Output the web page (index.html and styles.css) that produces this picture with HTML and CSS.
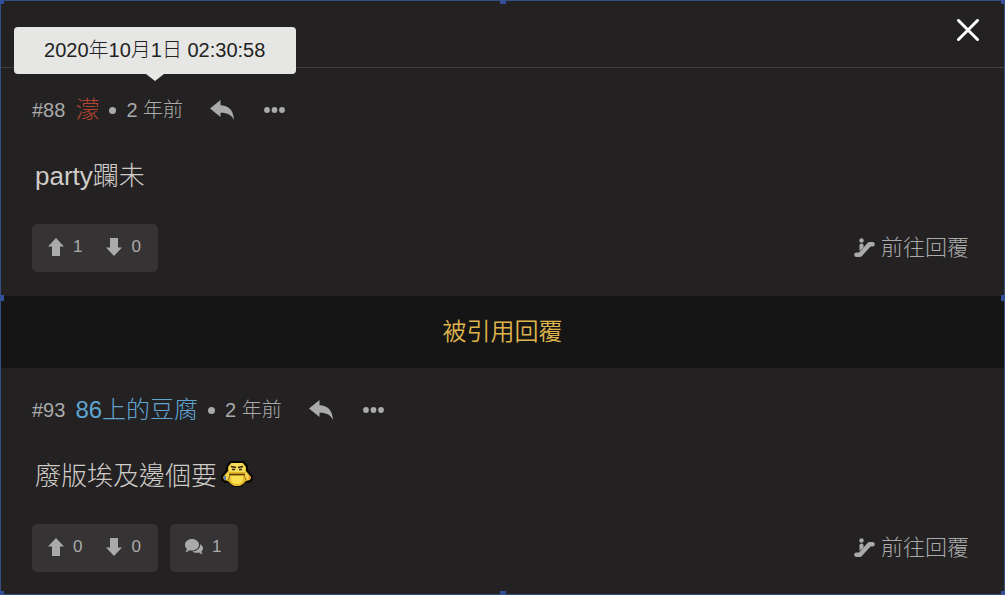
FILE: index.html
```
<!DOCTYPE html>
<html lang="zh-Hant">
<head>
    <meta charset="UTF-8">
    <meta name="viewport" content="width=device-width, initial-scale=1.0">
    <title>被引用回覆</title>
    <link rel="stylesheet" href="styles.css">
</head>
<body>

<!-- Shared icons -->
<svg class="sprite" aria-hidden="true">
    <symbol id="reply" viewBox="0 0 24 20"><path d="M0 8.500 10.500 0v5.200C18 5.400 23.500 9.500 24 20c-2.500-4.800-6.500-7.300-13.500-7.200V17z"/></symbol>
    <symbol id="more" viewBox="0 0 21 6"><circle cx="3" cy="3" r="2.900"/><circle cx="10.500" cy="3" r="2.900"/><circle cx="18" cy="3" r="2.900"/></symbol>
    <symbol id="up" viewBox="0 0 16 18"><path d="M8 0 16 8.500H12V18H4V8.500H0z"/></symbol>
    <symbol id="down" viewBox="0 0 16 18"><path d="M8 18 0 9.500H4V0H12V9.500H16z"/></symbol>
    <symbol id="goto" viewBox="0 0 21 20"><circle cx="7.500" cy="2.500" r="2.200"/><path d="M5.500 7.200Q5.500 5.500 7.500 5.500T9.500 7.200V9.500L5.500 13z"/><path d="M2.500 16.800H6L15.500 6.200H18.500" fill="none" stroke="currentColor" stroke-width="4.600" stroke-linecap="round" stroke-linejoin="round"/></symbol>
    <symbol id="comments" viewBox="0 0 18 16"><path d="M7 0c4 0 7 2.500 7 5.800s-3 5.800-7 5.800c-1 0-1.900-.1-2.700-.4C3.200 12.300 1.900 13 .5 13c.8-.9 1.300-1.900 1.400-3C.7 8.900 0 7.400 0 5.800 0 2.500 3 0 7 0z"/><path d="M15.200 5.200c1.700.9 2.800 2.300 2.800 4 0 1.300-.6 2.500-1.600 3.300.1 1 .6 1.900 1.300 2.700-1.500-.1-2.800-.7-3.700-1.600-2.700.6-5.400-.1-6.700-1.200 4.300 0 8-2.800 7.900-7.200z"/></symbol>
</svg>

<div class="dialog">
    <header class="dialog-header">
        <button class="btn close" aria-label="關閉">
            <svg width="22" height="22" viewBox="0 0 22 22"><path d="M1.500 1.500 20.500 20.500M20.500 1.500 1.500 20.500"/></svg>
        </button>
    </header>

    <article class="post">
        <div class="meta">
            <span class="number">#88</span>
            <a class="author female" href="#">濛</a>
            <span class="dot"></span>
            <span class="time">2 年前<span class="tooltip" role="tooltip">2020年10月1日 02:30:58</span></span>
            <button class="btn reply" aria-label="回覆"><svg width="24" height="20"><use href="#reply"/></svg></button>
            <button class="btn" aria-label="更多"><svg width="21" height="6"><use href="#more"/></svg></button>
        </div>
        <p class="content">party躝未</p>
        <div class="actions">
            <div class="box">
                <button class="btn vote" aria-label="正評"><svg width="16" height="18"><use href="#up"/></svg>1</button>
                <button class="btn vote" aria-label="負評"><svg width="16" height="18"><use href="#down"/></svg>0</button>
            </div>
            <a class="goto" href="#"><svg width="21" height="20"><use href="#goto"/></svg>前往回覆</a>
        </div>
    </article>

    <h2 class="section-title">被引用回覆</h2>

    <article class="post">
        <div class="meta">
            <span class="number">#93</span>
            <a class="author male" href="#">86上的豆腐</a>
            <span class="dot"></span>
            <span class="time">2 年前</span>
            <button class="btn reply" aria-label="回覆"><svg width="24" height="20"><use href="#reply"/></svg></button>
            <button class="btn" aria-label="更多"><svg width="21" height="6"><use href="#more"/></svg></button>
        </div>
        <p class="content">廢版埃及邊個要<svg class="emoji" width="32" height="28" viewBox="0 0 32 28">
            <path d="M9 1h14l4 5v4l5 6v4l-4 3h-4l-4 4H12l-4-4H4l-4-3v-4l5-6V6z" fill="#080600"/>
            <path d="M10 3h12l3 4v4l5 6-1 3-4 1-3 3-3 2h-6l-3-2-3-3-4-1-1-3 5-6V7z" fill="#e3b72c"/>
            <path d="M11 3h10l3 4v5H8V7z" fill="#f4dc58"/>
            <path d="M10 16h12v5l-3 3h-6l-3-3z" fill="#f9e04e"/>
            <path d="M7 12 3 17v2l3 1 3-5zM25 12l4 5v2l-3 1-3-5z" fill="#f3d54d"/>
            <path d="M10 6.500l5 1M22 6.500l-5 1M11 9.500h3M18 9.500h3" stroke="#352300" stroke-width="1.500" fill="none"/>
            <path d="M8 14.500h16" stroke="#5a4008" stroke-width="1.500" fill="none"/>
            <path d="M9 15 7 20M23 15l2 5" stroke="#a87818" stroke-width="1" fill="none"/>
            <path d="M3 16h2v4H3z" fill="#5c7fc0"/><path d="M28 16h2v3h-2z" fill="#ef892c"/>
        </svg></p>
        <div class="actions">
            <div class="box">
                <button class="btn vote" aria-label="正評"><svg width="16" height="18"><use href="#up"/></svg>0</button>
                <button class="btn vote" aria-label="負評"><svg width="16" height="18"><use href="#down"/></svg>0</button>
            </div>
            <button class="btn box replies" aria-label="回覆數目"><svg width="18" height="16"><use href="#comments"/></svg>1</button>
            <a class="goto" href="#"><svg width="21" height="20"><use href="#goto"/></svg>前往回覆</a>
        </div>
    </article>

    <!-- Selection handles -->
    <i class="handle top left"></i>
    <i class="handle top center"></i>
    <i class="handle top right"></i>
    <i class="handle middle left"></i>
    <i class="handle middle right"></i>
    <i class="handle bottom left"></i>
    <i class="handle bottom center"></i>
    <i class="handle bottom right"></i>
</div>

</body>
</html>
```
FILE: styles.css
```
* {
    box-sizing: border-box;
}
body {
    margin: 0;
    background-color: #232122;
    color: #aaa;
    font-family: "Liberation Sans", "Noto Sans CJK TC", sans-serif;
    font-size: 20px;
    font-weight: 300;
}
svg {
    fill: currentColor;
    flex-shrink: 0;
}
a {
    color: inherit;
    text-decoration: none;
}
.sprite {
    display: none;
}
.btn {
    display: flex;
    align-items: center;
    padding: 0;
    border: none;
    background: none;
    color: inherit;
    font: inherit;
    cursor: pointer;
}
.dialog {
    position: relative;
    min-height: 100vh;
    border: 1px solid #344f80;
}
.dialog-header {
    display: flex;
    justify-content: flex-end;
    height: 67px;
    padding: 18px 25px;
    border-bottom: 1px solid #403e3f;
}
.close {
    height: 22px;
}
.close svg {
    stroke: #fff;
    stroke-width: 3;
    stroke-linecap: round;
}
.post {
    padding: 24px 35px 24px 31px;
}
.post:last-of-type {
    padding-bottom: 0;
}
.meta {
    display: flex;
    align-items: center;
    height: 36px;
    line-height: 36px;
}
.author {
    height: 36px;
    margin-left: 10px;
    font-size: 24px;
}
.female {
    color: #b34630;
}
.male {
    color: #60a5d2;
}
.dot {
    width: 7px;
    height: 7px;
    margin: 0 10px;
    border-radius: 50%;
    background-color: #aaa;
}
.time {
    position: relative;
    height: 36px;
}
.reply {
    margin: 0 30px 0 27px;
}
.tooltip {
    position: absolute;
    bottom: 100%;
    left: 50%;
    width: 282px;
    margin-bottom: 18px;
    border-radius: 4px;
    background-color: #e6e6e4;
    color: #222;
    line-height: 47px;
    text-align: center;
    transform: translateX(-50%);
}
.tooltip::after {
    content: "";
    position: absolute;
    top: 100%;
    left: 50%;
    margin-left: -9px;
    border: 9px solid transparent;
    border-top: 7px solid #e6e6e4;
    border-bottom: 0;
}
.content {
    margin: 30px 3px;
    color: #d0ccc8;
    font-size: 26px;
    line-height: 36px;
}
.emoji {
    margin-left: 4px;
    vertical-align: -3px;
}
.actions {
    display: flex;
    align-items: center;
    gap: 12px;
}
.box {
    display: flex;
    align-items: center;
    gap: 24px;
    height: 48px;
    padding: 0 17px 3px 16px;
    border-radius: 5px;
    background-color: #353334;
}
.vote, .replies {
    gap: 9px;
    font-size: 17px;
}
.replies {
    padding-left: 15px;
}
.goto {
    display: flex;
    align-items: center;
    height: 48px;
    gap: 6px;
    margin-left: auto;
    font-size: 22px;
    line-height: 44px;
}
.section-title {
    margin: 0;
    background-color: #151515;
    color: #dfb44c;
    font-size: 24px;
    font-weight: 350;
    line-height: 72px;
    text-align: center;
}
.handle {
    position: absolute;
    width: 6px;
    height: 4px;
    background-color: #344f9a;
}
.top {
    top: -1px;
}
.middle {
    top: calc(50% - 3px);
}
.bottom {
    bottom: -1px;
}
.left {
    left: -1px;
}
.center {
    left: calc(50% - 3px);
}
.right {
    right: -1px;
}
.left, .right {
    width: 4px;
}
.middle {
    height: 6px;
}
```
